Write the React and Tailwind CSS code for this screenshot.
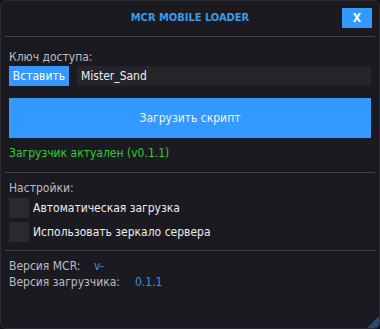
import React, { useState } from "react";

export default function App() {
  const [key, setKey] = useState("Mister_Sand");
  const [autoLoad, setAutoLoad] = useState(false);
  const [mirror, setMirror] = useState(false);

  return (
    <div className="w-[380px] h-[329px] bg-[#141418]" style={{ fontFamily: '"DejaVu Sans Condensed", "DejaVu Sans", sans-serif', fontStretch: "condensed" }}>
      <div className="relative w-full h-full rounded-[6px] border border-[#2c2c34] bg-[#1b1a20] text-[12px] leading-4 overflow-hidden">
        {/* Header */}
        <div className="grid grid-cols-[1fr_auto_1fr] items-start h-[35px]">
          <div />
          <div className="pt-[9px] text-[11px] font-semibold text-[#3d9be9]">MCR MOBILE LOADER</div>
          <div className="flex justify-end pt-[7px] pr-[7px]">
            <button className="w-[30px] h-5 bg-[#3399ff] text-white text-[12px] leading-5 font-semibold">X</button>
          </div>
        </div>
        <div className="mx-1 h-px bg-[#42424c]" />

        <div className="px-2">
          {/* Access key */}
          <div className="mt-3 text-[#bdbdc2]">Ключ доступа:</div>
          <div className="mt-px flex gap-2 h-5">
            <button className="w-[60px] h-5 bg-[#3399ff] text-white leading-5">Вставить</button>
            <input
              value={key}
              onChange={(e) => setKey(e.target.value)}
              className="flex-1 h-5 bg-[#25242a] text-[#eeeeee] px-1 outline-none"
            />
          </div>

          <button className="mt-3 w-full h-10 bg-[#3399ff] text-[#f2f2f2]">Загрузить скрипт</button>

          <div className="mt-[7px] text-[#2fcc33]">Загрузчик актуален (v0.1.1)</div>

          <div className="-mx-1 mt-[11px] h-px bg-[#42424c]" />

          {/* Settings */}
          <div className="mt-[7px] text-[#bdbdc2]">Настройки:</div>
          <div className="mt-[2px] flex flex-col gap-1">
            <label className="flex items-center gap-1 cursor-pointer">
              <span
                onClick={() => setAutoLoad(!autoLoad)}
                className="w-5 h-5 bg-[#2a292f] flex items-center justify-center text-[#3399ff]"
              >
                {autoLoad ? "✓" : ""}
              </span>
              <span className="text-[#ececec]">Автоматическая загрузка</span>
            </label>
            <label className="flex items-center gap-1 cursor-pointer">
              <span
                onClick={() => setMirror(!mirror)}
                className="w-5 h-5 bg-[#2a292f] flex items-center justify-center text-[#3399ff]"
              >
                {mirror ? "✓" : ""}
              </span>
              <span className="text-[#ececec]">Использовать зеркало сервера</span>
            </label>
          </div>

          <div className="-mx-1 mt-2 h-px bg-[#42424c]" />

          {/* Versions */}
          <div className="mt-[7px] flex">
            <span className="w-[85px] text-[#bdbdc2]">Версия MCR:</span>
            <span className="text-[#3a8ee6]">v-</span>
          </div>
          <div className="flex">
            <span className="w-[126px] text-[#bdbdc2]">Версия загрузчика:</span>
            <span className="text-[#3a8ee6]">0.1.1</span>
          </div>
        </div>

        {/* Resize grip */}
        <svg className="absolute right-0 bottom-0" width="12" height="12" viewBox="0 0 12 12">
          <polygon points="12,0 12,12 0,12" fill="#2b4a72" />
        </svg>
      </div>
    </div>
  );
}
